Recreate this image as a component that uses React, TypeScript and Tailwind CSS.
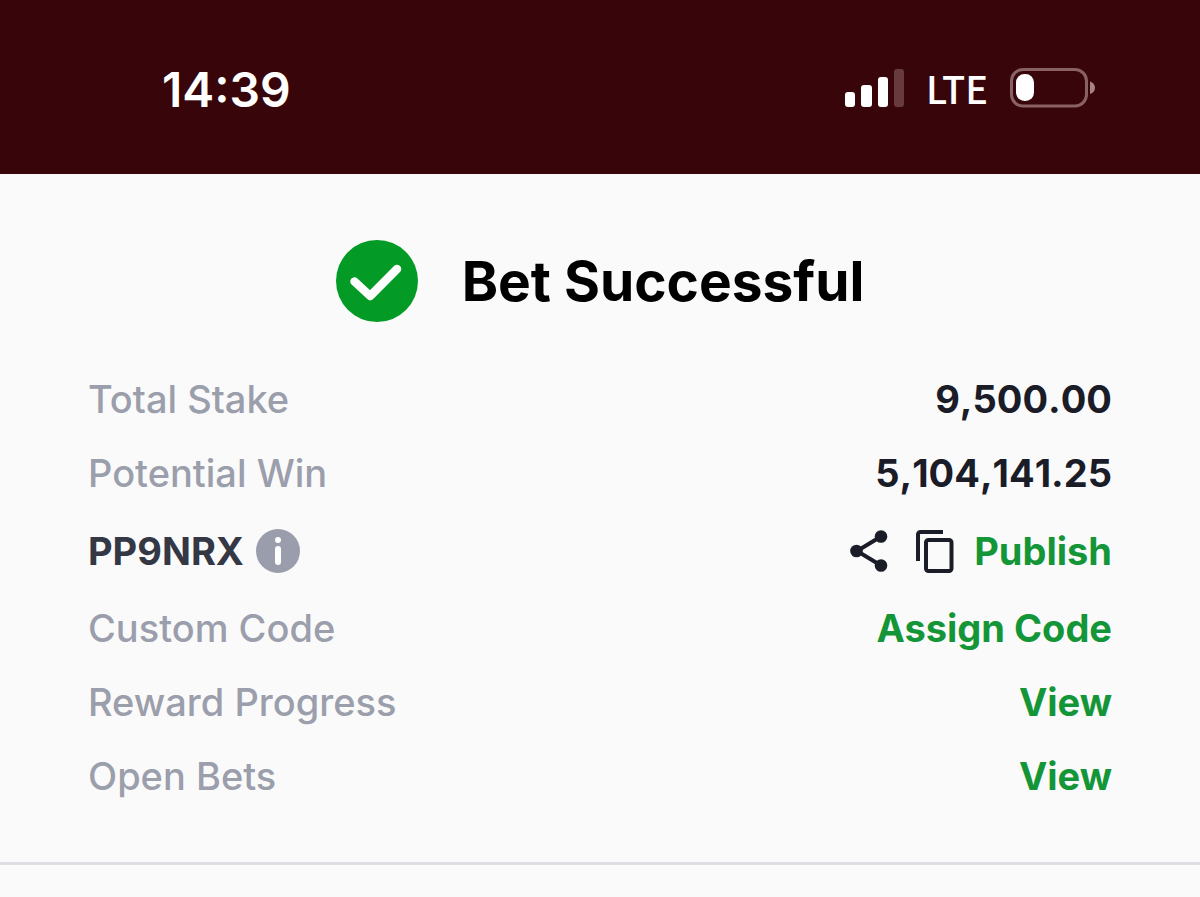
import type { ReactNode } from 'react';

function SignalIcon() {
  return (
    <svg width="60" height="38" viewBox="0 0 60 38" fill="#fff" aria-hidden="true">
      <rect x="1" y="23" width="10" height="15" rx="3" />
      <rect x="17" y="16" width="11" height="22" rx="3" />
      <rect x="34" y="8" width="10" height="30" rx="3" />
      <rect x="50" y="0" width="10" height="38" rx="3" fill="#673a3e" />
    </svg>
  );
}

function BatteryIcon() {
  return (
    <svg width="86" height="40" viewBox="0 0 86 40" aria-hidden="true">
      <rect x="1.5" y="1.5" width="75" height="36.5" rx="11.5" fill="none" stroke="#8a6164" strokeWidth="3" />
      <path d="M80 13.5c3 1 5 3.200 5 6.300s-2 5.300-5 6.300z" fill="#a58487" />
      <rect x="6" y="6" width="18" height="27" rx="8.500" fill="#fff" />
    </svg>
  );
}

function CheckIcon() {
  return (
    <svg width="82" height="82" viewBox="0 0 82 82" aria-hidden="true">
      <circle cx="41" cy="41" r="41" fill="#039b25" />
      <path d="M18.500 41.500 34.200 56 61 29" fill="none" stroke="#fff" strokeWidth="8.500" strokeLinecap="round" strokeLinejoin="round" />
    </svg>
  );
}

function InfoIcon() {
  return (
    <svg width="44" height="44" viewBox="0 0 44 44" aria-hidden="true">
      <circle cx="22" cy="22" r="22" fill="#9a9dab" />
      <circle cx="22" cy="11" r="3" fill="#fff" />
      <rect x="19" y="17" width="6" height="19" rx="3" fill="#fff" />
    </svg>
  );
}

function ShareIcon() {
  return (
    <svg width="38" height="42" viewBox="0 0 38 42" fill="#1a1c27" aria-hidden="true">
      <path d="M31 6.500 7 21l24 14.500" fill="none" stroke="#1a1c27" strokeWidth="4" />
      <circle cx="31" cy="6.500" r="6.300" />
      <circle cx="6.500" cy="21" r="6.300" />
      <circle cx="31" cy="35.500" r="6.300" />
    </svg>
  );
}

function CopyIcon() {
  return (
    <svg width="38" height="44" viewBox="0 0 38 44" fill="none" stroke="#1a1c27" strokeWidth="4" aria-hidden="true">
      <path d="M2 32V5.500A2.500 2.500 0 0 1 4.500 3H27" />
      <rect x="10" y="11" width="25.500" height="31" rx="2.500" />
    </svg>
  );
}

function Row({ label, children }: { label: string; children: ReactNode }) {
  return (
    <div className="flex h-[74px] items-center justify-between">
      <dt className="font-medium text-[#9b9eab]">{label}</dt>
      <dd className="font-bold text-[#1a1c27] [font-kerning:none]">{children}</dd>
    </div>
  );
}

function Action({ children }: { children: ReactNode }) {
  return (
    <button type="button" className="font-bold text-[#149638] [font-kerning:normal]">
      {children}
    </button>
  );
}

export default function App() {
  return (
    <div className="min-h-screen bg-[#fafafb] font-['Inter',sans-serif]">
      <header className="flex h-[174px] items-center justify-between bg-[#38060a] pt-0.5 pr-[104px] pl-[162px] text-white">
        <time className="pt-1 text-5xl font-semibold">14:39</time>
        <div className="flex items-center gap-[22px]">
          <SignalIcon />
          <span className="font-['Noto_Sans_CJK_JP',sans-serif] text-[38px] leading-none font-medium">LTE</span>
          <BatteryIcon />
        </div>
      </header>
      <main>
        <section className="border-b-[3px] border-[#dddde4] px-[88px] pt-[66px] pb-[49px]">
          <div className="flex items-center justify-center gap-11">
            <CheckIcon />
            <h1 className="text-[55px] leading-none font-bold text-black">Bet Successful</h1>
          </div>
          <dl className="pt-10 text-[38px] leading-none">
            <Row label="Total Stake">9,500.00</Row>
            <Row label="Potential Win">5,104,141.25</Row>
            <div className="flex h-[81px] items-center justify-between">
              <dt className="flex items-center gap-3 font-bold text-[#343744]">
                PP9NRX
                <button type="button" aria-label="Booking code information">
                  <InfoIcon />
                </button>
              </dt>
              <dd className="flex items-center">
                <button type="button" aria-label="Share" className="mr-7">
                  <ShareIcon />
                </button>
                <button type="button" aria-label="Copy code" className="mr-5">
                  <CopyIcon />
                </button>
                <Action>Publish</Action>
              </dd>
            </div>
            <Row label="Custom Code"><Action>Assign Code</Action></Row>
            <Row label="Reward Progress"><Action>View</Action></Row>
            <Row label="Open Bets"><Action>View</Action></Row>
          </dl>
        </section>
      </main>
    </div>
  );
}
